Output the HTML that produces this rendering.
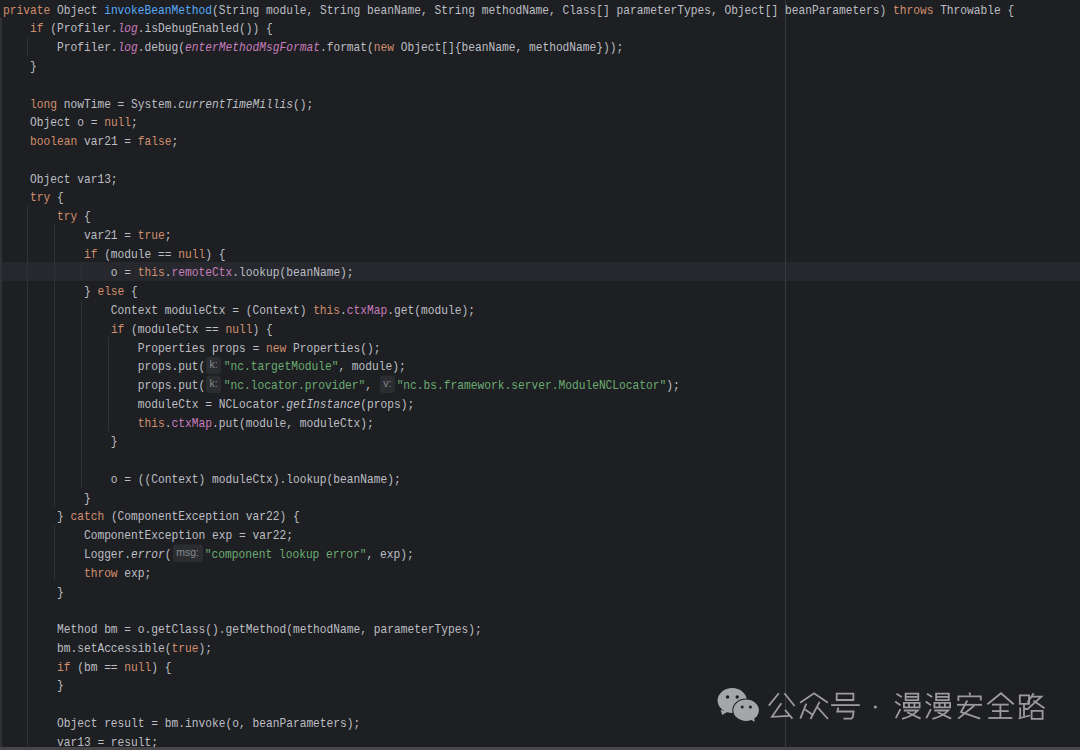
<!DOCTYPE html>
<html><head><meta charset="utf-8">
<style>
html,body{margin:0;padding:0;}
body{width:1080px;height:750px;overflow:hidden;background:#1e1f22;position:relative;}
.ln{position:absolute;left:3.0px;height:18.77px;line-height:18.77px;white-space:pre;font-family:"Liberation Mono",monospace;font-size:11.243px;color:#bcbec4;padding-top:1.8px;box-sizing:border-box;transform-origin:0 13.2px;transform:translateY(0.5px) scaleY(1.1);}
.k{color:#cf8e6d}
.m{color:#56a8f5}
.f{color:#c77dbb}
.i{font-style:italic}
.s{color:#6aab73}
.h{display:inline-block;width:18.5px;height:10px;position:relative;vertical-align:baseline}
.h b{position:absolute;left:1px;top:-1.8px;height:15.6px;line-height:14.2px;text-align:center;border-radius:3px;background:#2b2d30;color:#868991;font-weight:normal;font-family:"Liberation Sans",sans-serif;font-size:10.5px;}
.g{position:absolute;width:1.2px;background:#2f3134;}
#cur{position:absolute;left:0;top:262.2px;width:1080px;height:18.8px;background:#26282e;}
#rm{position:absolute;left:785px;top:0;width:1px;height:750px;background:#393b40;}
#bot{position:absolute;left:0;top:746.8px;width:1080px;height:3.2px;background:#464648;}
</style></head><body>
<div id="cur"></div>
<div class="g" style="left:0.00px;width:2.1px;top:18.07px;height:750.80px"></div><div class="g" style="left:27.29px;width:1.2px;top:36.84px;height:18.77px"></div><div class="g" style="left:27.29px;width:1.2px;top:205.77px;height:563.10px"></div><div class="g" style="left:54.28px;width:1.2px;top:224.54px;height:281.55px"></div><div class="g" style="left:81.26px;width:1.2px;top:262.08px;height:18.77px"></div><div class="g" style="left:81.26px;width:1.2px;top:299.62px;height:187.70px"></div><div class="g" style="left:108.25px;width:1.2px;top:337.16px;height:93.85px"></div><div class="g" style="left:54.28px;width:1.2px;top:524.86px;height:56.31px"></div>
<div id="rm"></div>
<div class="ln" style="top:-1.30px"><span class="k">private</span> Object <span class="m">invokeBeanMethod</span>(String module, String beanName, String methodName, Class[] parameterTypes, Object[] beanParameters) <span class="k">throws</span> Throwable {</div>
<div class="ln" style="top:17.47px">    <span class="k">if</span> (Profiler.<span class="f i">log</span>.isDebugEnabled()) {</div>
<div class="ln" style="top:36.24px">        Profiler.<span class="f i">log</span>.debug(<span class="f i">enterMethodMsgFormat</span>.format(<span class="k">new</span> Object[]{beanName, methodName}));</div>
<div class="ln" style="top:55.01px">    }</div>
<div class="ln" style="top:92.55px">    <span class="k">long</span> nowTime = System.<span class="i">currentTimeMillis</span>();</div>
<div class="ln" style="top:111.32px">    Object o = <span class="k">null</span>;</div>
<div class="ln" style="top:130.09px">    <span class="k">boolean</span> var21 = <span class="k">false</span>;</div>
<div class="ln" style="top:167.63px">    Object var13;</div>
<div class="ln" style="top:186.40px">    <span class="k">try</span> {</div>
<div class="ln" style="top:205.17px">        <span class="k">try</span> {</div>
<div class="ln" style="top:223.94px">            var21 = <span class="k">true</span>;</div>
<div class="ln" style="top:242.71px">            <span class="k">if</span> (module == <span class="k">null</span>) {</div>
<div class="ln" style="top:261.48px">                o = <span class="k">this</span>.<span class="f">remoteCtx</span>.lookup(beanName);</div>
<div class="ln" style="top:280.25px">            } <span class="k">else</span> {</div>
<div class="ln" style="top:299.02px">                Context moduleCtx = (Context) <span class="k">this</span>.<span class="f">ctxMap</span>.get(module);</div>
<div class="ln" style="top:317.79px">                <span class="k">if</span> (moduleCtx == <span class="k">null</span>) {</div>
<div class="ln" style="top:336.56px">                    Properties props = <span class="k">new</span> Properties();</div>
<div class="ln" style="top:355.33px">                    props.put(<span class="h" style="width:18.5px"><b style="width:14.8px">k:</b></span><span class="s">"nc.targetModule"</span>, module);</div>
<div class="ln" style="top:374.10px">                    props.put(<span class="h" style="width:18.5px"><b style="width:14.8px">k:</b></span><span class="s">"nc.locator.provider"</span>, <span class="h" style="width:17.8px"><b style="width:15px">v:</b></span><span class="s">"nc.bs.framework.server.ModuleNCLocator"</span>);</div>
<div class="ln" style="top:392.87px">                    moduleCtx = NCLocator.<span class="i">getInstance</span>(props);</div>
<div class="ln" style="top:411.64px">                    <span class="k">this</span>.<span class="f">ctxMap</span>.put(module, moduleCtx);</div>
<div class="ln" style="top:430.41px">                }</div>
<div class="ln" style="top:467.95px">                o = ((Context) moduleCtx).lookup(beanName);</div>
<div class="ln" style="top:486.72px">            }</div>
<div class="ln" style="top:505.49px">        } <span class="k">catch</span> (ComponentException var22) {</div>
<div class="ln" style="top:524.26px">            ComponentException exp = var22;</div>
<div class="ln" style="top:543.03px">            Logger.<span class="i">error</span>(<span class="h" style="width:33.2px"><b style="width:30.2px">msg:</b></span><span class="s">"component lookup error"</span>, exp);</div>
<div class="ln" style="top:561.80px">            <span class="k">throw</span> exp;</div>
<div class="ln" style="top:580.57px">        }</div>
<div class="ln" style="top:618.11px">        Method bm = o.getClass().getMethod(methodName, parameterTypes);</div>
<div class="ln" style="top:636.88px">        bm.setAccessible(<span class="k">true</span>);</div>
<div class="ln" style="top:655.65px">        <span class="k">if</span> (bm == <span class="k">null</span>) {</div>
<div class="ln" style="top:674.42px">        }</div>
<div class="ln" style="top:711.96px">        Object result = bm.invoke(o, beanParameters);</div>
<div class="ln" style="top:730.73px">        var13 = result;</div>
<svg style="position:absolute;left:0;top:0" width="1080" height="750" viewBox="0 0 1080 750">
<g fill="none" stroke="#9c9c9e" stroke-width="1.8" stroke-linejoin="miter">
<path d="M778.8,693.3 L768.8,705.6"/><path d="M784.4,693.3 L794.6,706.0"/><path d="M781.3,703.3 L772.0,716.8 L789.5,715.8"/><path d="M785.0,709.8 L792.4,718.6"/><path d="M800.1,702.8 L814.0,693.3 L827.9,702.8"/><path d="M806.3,703.7 L800.3,718.6"/><path d="M805.2,709.5 L812.2,714.4"/><path d="M819.6,701.9 L810.5,719.0"/><path d="M817.6,707.4 L828.0,719.0"/><path d="M836.7,693.6 H853.4 V700.0 H836.7 Z"/><path d="M831.1,705.1 L859.8,705.1"/><path d="M838.3,707.5 L837.3,711.5 L853.6,711.5 L852.8,717.2 L851.4,718.6 L843.5,718.7"/><path d="M896.5,693.8 L901.7,697.1"/><path d="M895.2,701.6 L900.4,705.2"/><path d="M900.4,709.1 L895.8,718.1"/><path d="M905.6,693.6 H918.3 V700.2 H905.6 Z"/><path d="M905.6,696.9 L918.3,696.9"/><path d="M903.9,702.8 H919.6 V707.3 H903.9 Z"/><path d="M909.0,702.8 L909.0,707.3"/><path d="M914.4,702.8 L914.4,707.3"/><path d="M903.8,710.5 L917.8,710.5 Q913,716 902.0,718.8"/><path d="M907.2,712.3 L920.6,718.6"/><path d="M927.0,693.8 L932.2,697.1"/><path d="M925.7,701.6 L930.9,705.2"/><path d="M930.9,709.1 L926.3,718.1"/><path d="M936.1,693.6 H948.8 V700.2 H936.1 Z"/><path d="M936.1,696.9 L948.8,696.9"/><path d="M934.4,702.8 H950.1 V707.3 H934.4 Z"/><path d="M939.5,702.8 L939.5,707.3"/><path d="M944.9,702.8 L944.9,707.3"/><path d="M934.3,710.5 L948.3,710.5 Q943.5,716 932.5,718.8"/><path d="M937.7,712.3 L951.1,718.6"/><path d="M969.4,692.5 L970.3,695.5"/><path d="M958.4,700.9 L958.4,696.3 L980.8,696.3 L980.8,700.5"/><path d="M957.0,704.8 L982.0,704.8"/><path d="M967.3,700.5 L961.0,712.0 L980.2,718.6"/><path d="M974.4,705.5 L958.2,718.6"/><path d="M987.4,704.3 L1001.0,693.2 L1013.7,704.3"/><path d="M992.0,704.6 L1008.7,704.6"/><path d="M992.0,711.1 L1008.7,711.1"/><path d="M988.3,718.0 L1012.3,718.0"/><path d="M1000.4,704.6 L1000.4,718.0"/><path d="M1019.8,695.4 H1029.1 V703.8 H1019.8 Z"/><path d="M1024.0,703.8 L1024.0,716.5"/><path d="M1024.0,709.0 L1028.8,709.0"/><path d="M1020.2,707.5 L1020.2,717.5"/><path d="M1018.5,718.5 L1030.0,715.5"/><path d="M1033.7,693.2 L1027.5,702.5"/><path d="M1032.0,696.6 L1041.4,696.6 L1028.3,708.4"/><path d="M1033.5,700.8 L1044.5,708.2"/><path d="M1031.6,710.9 H1042.6 V718.9 H1031.6 Z"/>
</g>
<circle cx="875.3" cy="707.0" r="1.6" fill="#9c9c9e"/>
<g fill="#a5a6a8">
<ellipse cx="732.2" cy="700.5" rx="14.6" ry="12.5"/>
<path d="M720.5,710 L722.3,715 L728,711.5 Z"/>
</g>
<ellipse cx="746.1" cy="710.3" rx="13.8" ry="11.7" fill="#1e1f22"/>
<g fill="#a5a6a8">
<ellipse cx="746.1" cy="710.3" rx="12.8" ry="10.7"/>
<path d="M750,719 L754.6,722 L754.2,717 Z"/>
</g>
<g fill="#1e1f22">
<circle cx="727.6" cy="697" r="1.7"/><circle cx="737.2" cy="697" r="1.7"/>
<circle cx="742.2" cy="707" r="1.5"/><circle cx="750.4" cy="707" r="1.5"/>
</g>
</svg>
<div id="bot"></div>
</body></html>
